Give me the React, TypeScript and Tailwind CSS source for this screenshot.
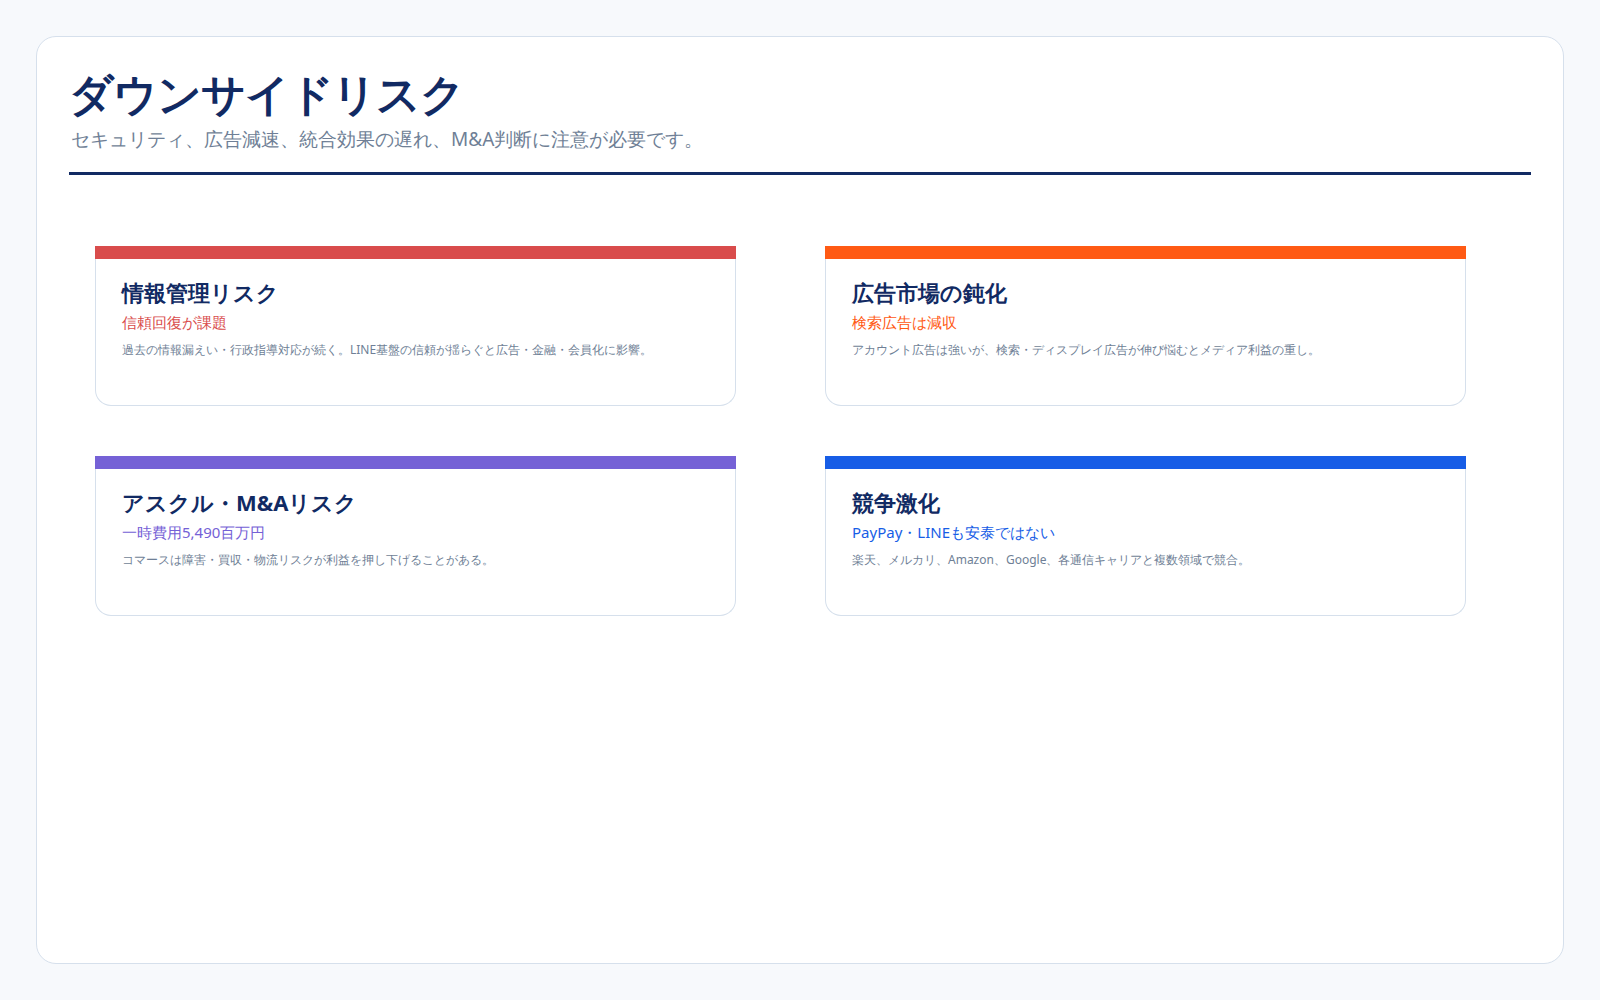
import React from 'react'

const cards = [
  { title: '情報管理リスク', sub: '信頼回復が課題', desc: '過去の情報漏えい・行政指導対応が続く。LINE基盤の信頼が揺らぐと広告・金融・会員化に影響。', bar: 'bg-[#d94c4c]', color: 'text-[#d94c4c]' },
  { title: '広告市場の鈍化', sub: '検索広告は減収', desc: 'アカウント広告は強いが、検索・ディスプレイ広告が伸び悩むとメディア利益の重し。', bar: 'bg-[#ff5a14]', color: 'text-[#ff5a14]' },
  { title: 'アスクル・M&Aリスク', sub: '一時費用5,490百万円', desc: 'コマースは障害・買収・物流リスクが利益を押し下げることがある。', bar: 'bg-[#7561d6]', color: 'text-[#7561d6]' },
  { title: '競争激化', sub: 'PayPay・LINEも安泰ではない', desc: '楽天、メルカリ、Amazon、Google、各通信キャリアと複数領域で競合。', bar: 'bg-[#175de6]', color: 'text-[#175de6]' },
]

export default function App() {
  return (
    <div className="w-[1600px] h-[1000px] bg-[#f7f9fc] p-[36px] font-['Noto_Sans','Noto_Sans_CJK_JP',sans-serif]">
      <div className="h-full bg-white border border-[#d6e0ec] rounded-[20px] px-[32px] pt-[28px]">
        <h1 className="text-[44px] leading-[56px] font-bold text-[#112a63] tracking-tight">ダウンサイドリスク</h1>
        <p className="mt-[4px] text-[19px] leading-[28px] text-[#6f7f96] pl-[2px]">セキュリティ、広告減速、統合効果の遅れ、M&A判断に注意が必要です。</p>
        <div className="mt-[19px] h-[3px] bg-[#112a63]" />
        <div className="mt-[71px] pl-[26px] grid grid-cols-[641px_641px] gap-x-[89px] gap-y-[50px]">
          {cards.map((c) => (
            <div key={c.title} className="h-[160px] flex flex-col">
              <div className={`h-[13px] ${c.bar}`} />
              <div className="flex-1 border border-t-0 border-[#d6e0ec] rounded-b-[16px] px-[26px] pt-[18px]">
                <div className="text-[22px] leading-[30px] font-bold text-[#112a63]">{c.title}</div>
                <div className={`mt-[4px] text-[15px] leading-[22px] ${c.color}`}>{c.sub}</div>
                <div className="mt-[8px] text-[12px] leading-[18px] text-[#6f7f96]">{c.desc}</div>
              </div>
            </div>
          ))}
        </div>
      </div>
    </div>
  )
}
